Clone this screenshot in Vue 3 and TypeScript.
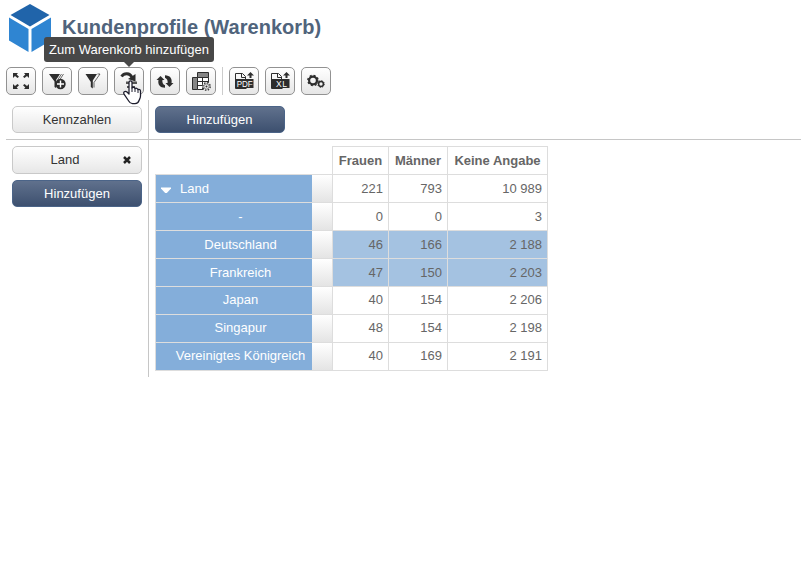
<script setup lang="ts">
interface Row { name: string; values: string[]; selected?: boolean; parent?: boolean; raised?: boolean }

const columns: string[] = ['Frauen', 'Männer', 'Keine Angabe']
const rows: Row[] = [
  { name: 'Land', values: ['221', '793', '10 989'], parent: true },
  { name: '-', values: ['0', '0', '3'] },
  { name: 'Deutschland', values: ['46', '166', '2 188'], selected: true },
  { name: 'Frankreich', values: ['47', '150', '2 203'], selected: true },
  { name: 'Japan', values: ['40', '154', '2 206'], raised: true },
  { name: 'Singapur', values: ['48', '154', '2 198'], raised: true },
  { name: 'Vereinigtes Königreich', values: ['40', '169', '2 191'], raised: true },
]
</script>

<template>
  <div class="page">
    <header class="header">
      <svg class="logo" width="42" height="48" viewBox="0 0 42 48">
        <path d="M21 0 40.500 11 21 22.500 1.500 11z" fill="#2064aa" />
        <path d="M0 13.500 19.500 25V48L0 36.500z" fill="#2f85d2" />
        <path d="M42 13.500 22.500 25V48L42 36.500z" fill="#2f85d2" />
      </svg>
      <h1>Kundenprofile (Warenkorb)</h1>
    </header>

    <div class="toolbar">
      <button class="tool">
        <svg width="28" height="26" viewBox="0 0 28 26" fill="#2d2d2d">
          <path d="M6 5h5l-1.300 1.500L12 8.800 10.500 10 8 8 6 10z" />
          <path d="M22 5h-5l1.300 1.500L16 8.800l1.500 1.200L20 8l2 2z" />
          <path d="M6 21h5l-1.300-1.500 2.300-2.300-1.500-1.200L8 18l-2-2z" />
          <path d="M22 21h-5l1.300-1.500-2.300-2.300 1.500-1.200 2.500 2 2-2z" />
        </svg>
      </button>
      <button class="tool">
        <svg width="28" height="26" viewBox="0 0 28 26">
          <path d="M6 6h11l-4 6v8l-1.500-1v-5.500z" fill="#2d2d2d" />
          <path d="M20.500 6 16 13M18.500 6l-4.500 7" fill="none" stroke="#2d2d2d" stroke-width=".7" />
          <circle cx="17.500" cy="16" r="5.200" fill="#2d2d2d" />
          <path d="M17.500 12.500v7M14 16h7" stroke="#fff" stroke-width="1.400" />
        </svg>
      </button>
      <button class="tool">
        <svg width="28" height="26" viewBox="0 0 28 26">
          <path d="M6.500 6h11.500l-4.200 6.500V20.500l-2-1.500v-5z" fill="#2d2d2d" />
          <path d="M18.500 6H21l-6 8.500v5" fill="none" stroke="#2d2d2d" stroke-width=".7" />
        </svg>
      </button>
      <button class="tool active">
        <svg width="28" height="26" viewBox="0 0 28 26">
          <path d="M6.500 8.500C9 4.800 15 4.500 17 9.500" fill="none" stroke="#2d2d2d" stroke-width="2.800" />
          <path d="M20.500 6v7.500L13 11z" fill="#2d2d2d" />
          <path d="M11 13.500h11v2.500H11zM12 18h8v2h-8z" fill="#555" />
        </svg>
        <span class="tooltip">Zum Warenkorb hinzufügen</span>
        <svg class="cursor" width="19" height="25" viewBox="0 0 19 25">
          <path d="M6 2.500C6 .3 9 .3 9 2.500V8c.5-1 2.700-.8 3 .7.700-.9 2.700-.5 2.900.9 1-.6 2.600-.1 2.600 1.600V16c0 2-.8 3-1.500 4.500-.4 1.700-1.900 3-4 3H9.500c-2 0-3-1-3.800-2.500L1.200 14.300C-.2 12.200 2 10.300 4 12l2 2z" fill="#fff" stroke="#1c1c2c" stroke-width="1.250" stroke-linejoin="round" />
          <path d="M9 7.500V12m3-3.500V12m3-2v3" stroke="#1c1c2c" fill="none" />
        </svg>
      </button>
      <button class="tool">
        <svg width="28" height="26" viewBox="0 0 28 26" fill="#2d2d2d">
          <path d="M5.500 12 9.500 8l4 4h-2.100c-.3 2.600.5 4.300 2.600 5.300v2.500C9 19.700 6.500 16.500 7.500 12z" />
          <path d="M22.500 15l-4 4-4-4h2.100c.3-2.600-.5-4.300-2.600-5.300V7.200c5 .1 7.500 3.300 6.500 7.800z" />
        </svg>
      </button>
      <button class="tool">
        <svg width="28" height="26" viewBox="0 0 28 26">
          <path d="M5.500 9.500h5v12h-5zM10.500 4.500h11v5h-11z" fill="#858585" stroke="#2d2d2d" />
          <path d="M10.500 9.500h11v12h-11z" fill="#fff" stroke="#2d2d2d" />
          <path d="M15.500 9.500v12m-5-8h11m-11 4h11" stroke="#2d2d2d" />
          <circle cx="19.500" cy="18.500" r="4.200" fill="#eee" />
          <circle cx="19.500" cy="18.500" r="3.700" fill="none" stroke="#333" stroke-width="1.400" stroke-dasharray="1.450 1.450" />
          <circle cx="19.500" cy="18.500" r="2.600" fill="none" stroke="#555" stroke-width=".7" />
          <circle cx="19.500" cy="18.500" r="1" fill="#333" />
        </svg>
      </button>
      <span class="separator"></span>
      <button class="tool">
        <svg width="28" height="26" viewBox="0 0 28 26">
          <path d="M5.500 11V5.500h7L15.500 8.500V11M11.500 5.500v4h4M5.500 11v9.500h11" fill="none" stroke="#2d2d2d" />
          <path d="M6 11h17.500v9H6z" fill="#2d2d2d" />
          <text x="14.750" y="18.500" text-anchor="middle" textLength="16" lengthAdjust="spacingAndGlyphs" class="format">PDF</text>
          <path d="M19.500 10V7.500H17L20.500 4 24 7.500h-2.500V10z" fill="#2d2d2d" />
        </svg>
      </button>
      <button class="tool">
        <svg width="28" height="26" viewBox="0 0 28 26">
          <path d="M5.500 11V5.500h7L15.500 8.500V11M11.500 5.500v4h4M5.500 11v9.500h11" fill="none" stroke="#2d2d2d" />
          <path d="M6 11h17.500v9H6z" fill="#2d2d2d" />
          <text x="15.500" y="18.500" text-anchor="middle" textLength="11" class="format">XL</text>
          <path d="M19.500 10V7.500H17L20.500 4 24 7.500h-2.500V10z" fill="#2d2d2d" />
        </svg>
      </button>
      <button class="tool">
        <svg width="28" height="26" viewBox="0 0 28 26" fill="none" stroke="#2d2d2d">
          <circle cx="11" cy="12.500" r="3.900" stroke-width="2.200" />
          <circle cx="11" cy="12.500" r="5.100" stroke-width="1.500" stroke-dasharray="2 2" />
          <circle cx="19" cy="16" r="2.400" stroke-width="1.500" />
          <circle cx="19" cy="16" r="3.300" stroke-width="1" stroke-dasharray="1.300 1.290" />
        </svg>
      </button>
    </div>

    <main class="pivot">
      <section class="corner"><button class="pill light">Kennzahlen</button></section>
      <section class="top"><button class="pill dark">Hinzufügen</button></section>
      <section class="side">
        <button class="pill light removable">
          <span>Land</span>
          <svg width="8" height="8" viewBox="0 0 8 8"><path d="m1 1 6 6m0-6L1 7" stroke="#222" stroke-width="2.500" /></svg>
        </button>
        <button class="pill dark">Hinzufügen</button>
      </section>
      <section class="data">
        <div class="row head">
          <div v-for="column in columns" :key="column" class="cell">{{ column }}</div>
        </div>
        <div v-for="row in rows" :key="row.name" class="row" :class="{ selected: row.selected, raised: row.raised }">
          <div class="label" :class="{ parent: row.parent }">
            <svg v-if="row.parent" width="10" height="6" viewBox="0 0 10 6"><path d="M0 .5h10v1L5.800 6H4.200L0 1.500z" fill="#fff" /></svg>
            <span>{{ row.name }}</span>
          </div>
          <div class="handle"></div>
          <div v-for="(value, i) in row.values" :key="i" class="cell">{{ value }}</div>
        </div>
      </section>
    </main>
  </div>
</template>

<style>
body { margin: 0; background: #fff; }
</style>

<style scoped>
.page { height: 564px; overflow: hidden; font: 13px/16px "Liberation Sans", Arial, sans-serif; color: #666; }
.page * { box-sizing: border-box; }
button { font: inherit; margin: 0; padding: 0; }
svg { display: block; flex: none; }
.header { display: flex; align-items: flex-start; height: 67px; padding: 4px 0 0 9px; gap: 11px; }
h1 { margin: 11px 0 0; font-size: 20px; line-height: 24px; letter-spacing: .04px; color: #50647c; white-space: nowrap; }
.toolbar { display: flex; gap: 6px; height: 33px; padding-left: 6px; }
.tool { position: relative; width: 30px; height: 28px; border: 1px solid #929292; border-radius: 5px; background: linear-gradient(#fff, #e6e6e6); }
.separator { width: 1px; height: 28px; background: #ccc; }
.format { font: 8.500px "Liberation Sans", sans-serif; fill: #fff; }
.tooltip { position: absolute; left: -71px; top: -31px; width: 170px; height: 25px; border-radius: 3px; background: #484848; color: #fff; font-size: 13px; line-height: 25px; text-align: center; white-space: nowrap; }
.tooltip::after { content: ""; position: absolute; left: 80px; top: 25px; border: 5px solid transparent; border-top-color: #484848; border-bottom: 0; }
.cursor { position: absolute; left: 8px; top: 12px; z-index: 2; }
.pivot { display: grid; grid-template-columns: 143px 652px; grid-template-rows: 40px 237px; margin-left: 6px; }
.corner, .side { border-right: 1px solid #c6c6c6; padding: 6px; }
.corner, .top { border-bottom: 1px solid #c6c6c6; }
.top { padding: 6px; }
.side { display: flex; flex-direction: column; gap: 6px; }
.pill { display: block; width: 130px; height: 27px; border-radius: 5px; text-align: center; line-height: 24px; }
.light { border: 1px solid #c9c9c9; color: #333; background: linear-gradient(#fff, #e7e7e7); }
.dark { border: 1px solid #4b6488; color: #fff; background: linear-gradient(#60718d, #3d506f); }
.top .dark { padding-right: 1px; }
.removable { display: flex; height: 28px; align-items: center; padding: 0 10px 1px; }
.removable span { flex: 1; padding-right: 17px; padding-left: 1px; }
.data { padding: 6px; }
.row { display: flex; width: 393px; height: 28px; border-top: 1px solid #ddd; line-height: 27px; }
.row:last-child { height: 29px; border-bottom: 1px solid #ddd; }
.head { width: 216px; margin-left: 177px; font-weight: bold; }
.cell { border-left: 1px solid #ddd; width: 56px; padding-right: 5px; text-align: right; white-space: nowrap; }
.cell:nth-last-child(2) { width: 59px; }
.cell:last-child { width: 101px; border-right: 1px solid #ddd; }
.head .cell { padding: 0; text-align: center; }
.selected .cell { background: #a4c2e1; }
.label { width: 157px; border-left: 1px solid #ddd; padding-left: 13px; background: #84aeda; color: #fff; text-align: center; white-space: nowrap; }
.parent { display: flex; align-items: center; gap: 9px; padding-left: 5px; }
.parent svg { margin-top: 3px; }
.handle { width: 20px; background: linear-gradient(#fff, #e4e4e4); }
.raised { line-height: 25px; }
</style>
